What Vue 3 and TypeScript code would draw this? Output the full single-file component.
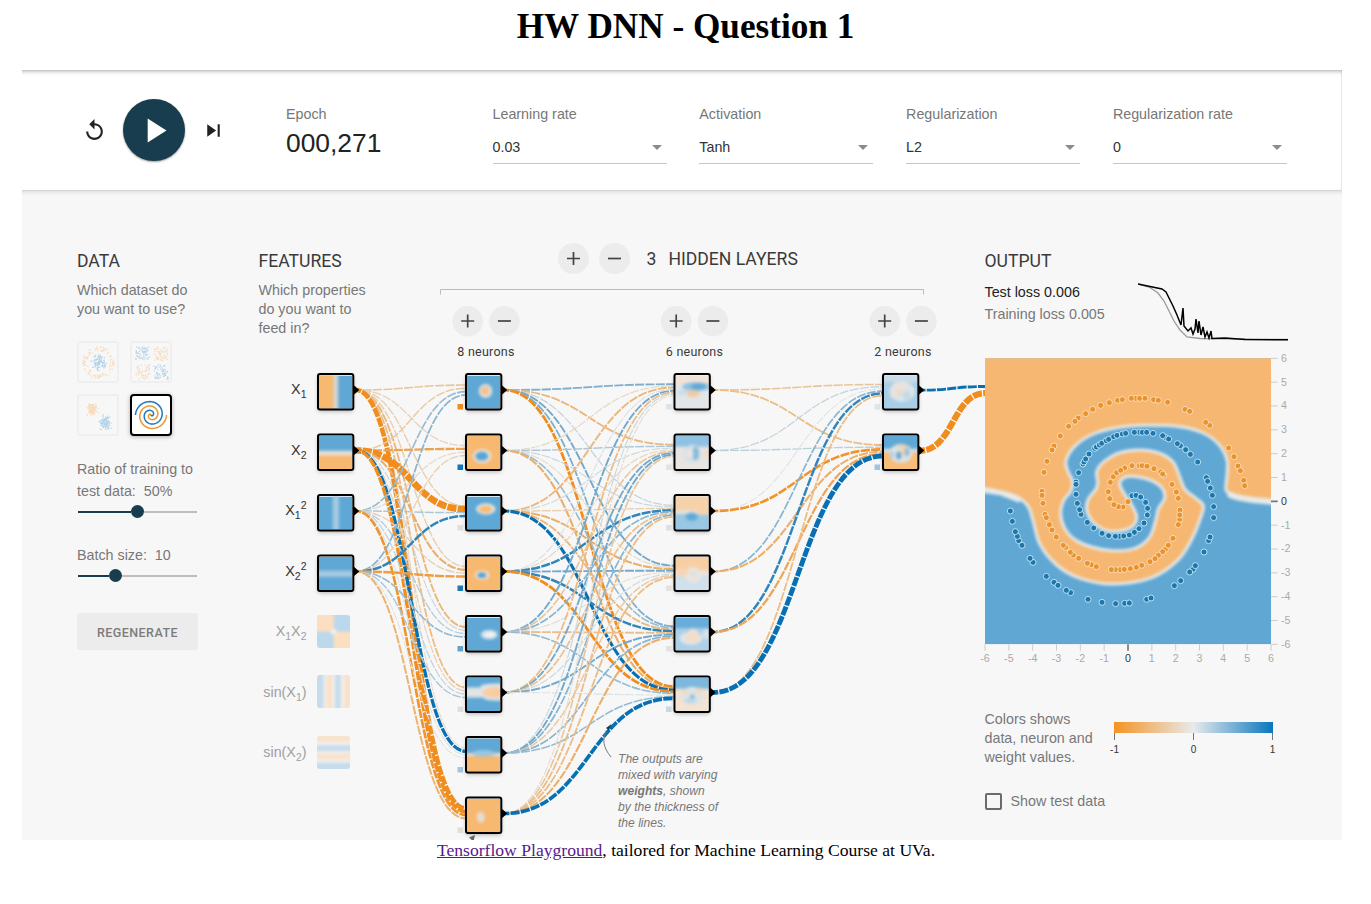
<script setup lang="ts">
type Point = [number, number]
interface Blob { x: number; y: number; rx: number; ry: number; c: string }
interface Band { x: number; y: number; w: number; h: number; c: string }
interface Node { x: number; y: number; base: string; bands: Band[]; blobs: Blob[]; bias?: string }

const ORANGE = '#f7b870'
const BLUE = '#5fa8d6'
const PALE = '#e8eaeb'

const e = (x: number, y: number, rx: number, ry: number, c: string): Blob => ({ x, y, rx, ry, c })
const b = (x: number, y: number, w: number, h: number, c: string): Band => ({ x, y, w, h, c })

const selects = [
  { label: 'Learning rate', value: '0.03' },
  { label: 'Activation', value: 'Tanh' },
  { label: 'Regularization', value: 'L2' },
  { label: 'Regularization rate', value: '0' },
]

/* ---------- network ---------- */
const rowY = (i: number) => 390 + i * 60.5

const features: Node[] = [
  { x: 317, y: 0, base: BLUE, bands: [b(-20, -20, 66, 140, ORANGE), b(43, -20, 14, 140, '#d6d6d2')], blobs: [] },
  { x: 317, y: 1, base: ORANGE, bands: [b(-20, -20, 140, 66, BLUE), b(-20, 44, 140, 14, '#e8dfd5')], blobs: [] },
  { x: 317, y: 2, base: BLUE, bands: [b(41, -20, 18, 140, '#a6cae2')], blobs: [] },
  { x: 317, y: 3, base: BLUE, bands: [b(-20, 41, 140, 18, '#a6cae2')], blobs: [] },
]
const idle = [
  { y: 615, base: '#bbd8ec', bands: [b(-20, -20, 70, 70, '#fbdfc0'), b(50, 50, 70, 70, '#fbdfc0')], blobs: [e(50, 50, 9, 9, '#f4efea')] },
  { y: 675, base: '#f2f1f0', bands: [b(-20, -20, 40, 140, '#c5dcec'), b(27, -20, 20, 140, '#f9e2cc'), b(54, -20, 17, 140, '#c5dcec'), b(80, -20, 40, 140, '#f9e2cc')], blobs: [] },
  { y: 736, base: '#f2f1f0', bands: [b(-20, -20, 140, 38, '#f9e2cc'), b(-20, 28, 140, 17, '#c5dcec'), b(-20, 52, 140, 19, '#f9e2cc'), b(-20, 80, 140, 40, '#c5dcec')], blobs: [] },
]
const layer1: Node[] = [
  { x: 465, y: 0, base: BLUE, bands: [], blobs: [e(55, 46, 20, 21, '#dfe3e4'), e(54, 45, 13, 13, '#f6c08a')], bias: '#f08c1f' },
  { x: 465, y: 1, base: ORANGE, bands: [], blobs: [e(45, 60, 28, 21, '#e8e2da'), e(44, 60, 19, 13, '#58a4d4')], bias: '#0f76b8' },
  { x: 465, y: 2, base: BLUE, bands: [], blobs: [e(56, 37, 29, 17, '#e3e6e6'), e(55, 38, 20, 11, '#f8bb78')], bias: '#e3ddd4' },
  { x: 465, y: 3, base: ORANGE, bands: [], blobs: [e(45, 54, 22, 14, '#efe2d3'), e(44, 54, 13, 8, '#4d9fd2')], bias: '#2077b4' },
  { x: 465, y: 4, base: BLUE, bands: [], blobs: [e(66, 51, 25, 14, '#d6e3ec'), e(68, 51, 15, 8, '#f2f1f0')], bias: '#64a4cc' },
  { x: 465, y: 5, base: BLUE, bands: [b(-20, 28, 140, 30, '#e2e4e5')], blobs: [e(90, 26, 50, 10, '#e2e4e5'), e(90, 60, 40, 8, '#dce3e6'), e(88, 43, 42, 16, '#f9cda0')], bias: '#e2dfd8' },
  { x: 465, y: 6, base: ORANGE, bands: [b(-20, -20, 140, 64, BLUE), b(-20, 44, 140, 8, '#dfe3e4')], blobs: [e(50, 44, 34, 10, '#9dc5df')], bias: '#a5c7dd' },
  { x: 465, y: 7, base: ORANGE, bands: [], blobs: [e(41, 54, 12, 17, '#e6dcd0')], bias: '#e5ddd1' },
]
const layer2: Node[] = [
  { x: 673.5, y: 0, base: '#e2e6e9', bands: [b(-20, -20, 140, 45, '#f1e3d8')], blobs: [e(62, 33, 42, 13, '#8dc0df'), e(68, 33, 22, 9, '#5fa8d6'), e(52, 54, 20, 10, '#f3c9a0'), e(20, 50, 14, 8, '#c9dbe6')], bias: '#dde3e7' },
  { x: 673.5, y: 1, base: '#e8e4e1', bands: [b(-20, -20, 140, 52, '#8fc2e2')], blobs: [e(50, 52, 26, 26, '#d3dfe6'), e(60, 52, 10, 20, '#88bbdb'), e(42, 52, 11, 12, '#ebe5e2'), e(94, 52, 9, 14, '#f2dcc6')], bias: '#e2e3e2' },
  { x: 673.5, y: 2, base: '#9ac7e4', bands: [b(-20, -20, 140, 64, '#f6d2ab'), b(-20, 42, 140, 10, '#e4e2dd')], blobs: [e(82, 42, 18, 14, '#f6d2ab'), e(48, 60, 18, 12, '#60a9d6')], bias: '#dbe2e7' },
  { x: 673.5, y: 3, base: '#d0e0ec', bands: [b(-20, -20, 140, 62, '#f7cfa3'), b(-20, 40, 140, 14, '#ece2da')], blobs: [e(52, 54, 24, 24, '#ebe3dd'), e(20, 46, 16, 14, '#f5d5b2'), e(53, 50, 9, 7, '#dae1e6')], bias: '#e4e3e1' },
  { x: 673.5, y: 4, base: '#acd0e7', bands: [b(-20, -20, 140, 52, '#68add9')], blobs: [e(46, 62, 34, 20, '#dfe4e6'), e(52, 50, 16, 18, '#eadfd5'), e(50, 62, 20, 14, '#f4ddc7'), e(92, 50, 12, 16, '#d5e2ea')], bias: '#e3e3e3' },
  { x: 673.5, y: 5, base: '#f2e3d3', bands: [b(-20, -20, 140, 52, '#7db7dc')], blobs: [e(50, 52, 34, 26, '#dde3e6'), e(30, 42, 9, 8, '#efdac4'), e(70, 38, 12, 8, '#efdac4'), e(50, 56, 7, 7, '#87b7d6'), e(44, 68, 18, 8, '#bdd6e5')], bias: '#c9d9e4' },
]
const layer3: Node[] = [
  { x: 882, y: 0, base: '#a9cfe7', bands: [b(-20, -20, 140, 40, '#c9dce8')], blobs: [e(54, 48, 38, 30, '#dce5ea'), e(48, 30, 24, 9, '#ece2d8'), e(46, 52, 8, 10, '#f1d9c0'), e(68, 60, 12, 14, '#c3d9e7'), e(28, 54, 8, 12, '#e6e2dd')], bias: '#dfe6eb' },
  { x: 882, y: 1, base: '#f7bd7b', bands: [b(-20, -20, 140, 60, BLUE), b(-20, 38, 140, 10, '#dbe0e2')], blobs: [e(50, 52, 34, 28, '#dde3e6'), e(58, 34, 20, 6, '#f3cfa8'), e(44, 58, 8, 12, '#6aa9d2'), e(68, 48, 8, 12, '#8fc0de'), e(56, 52, 6, 9, '#f4cfa6'), e(24, 56, 6, 12, '#b4d0e2')], bias: '#a3c4da' },
]
const nodes = [...features, ...layer1, ...layer2, ...layer3]

const w1 = [
  [-0.35, -0.2, -0.25, -0.25, -0.5, -0.45, -0.1, -1.9],
  [-0.3, -0.75, -3.1, -0.6, 0.12, -0.2, 1.25, -1.3],
  [0.35, -0.15, 0.25, -0.25, 0.2, 0.15, 0.04, -0.9],
  [0.4, -0.22, 0.8, -0.8, 0.35, 0.25, -0.05, -0.55],
]
const w2 = [
  [0.45, -0.5, 0.15, 0.5, 0.45, -1],
  [-0.15, 0.25, 0.12, -0.12, 0.35, -0.6],
  [-0.5, 0.1, -0.25, -0.6, -0.5, 1.15],
  [0.06, -0.15, 0.8, 0.5, 0.8, -1],
  [0.5, -0.35, 0.4, -0.1, -0.45, 0.35],
  [-0.45, 0.5, -0.4, 0.1, 0.5, 0.04],
  [0.12, 0.5, 0.4, -0.3, 0.4, 0.35],
  [-0.1, -0.35, -0.45, -0.45, -0.6, 1.45],
]
const w3 = [
  [-0.35, -0.45],
  [0.15, 0.18],
  [0.03, -0.9],
  [0.4, -0.6],
  [0.8, -0.7],
  [-0.45, 2.1],
]

function tint(w: number): string {
  const v = Math.min(1, Math.abs(w) * 1.02)
  const end = w < 0 ? [240, 141, 30] : [8, 112, 178]
  const mid = [228, 229, 228]
  return `rgb(${mid.map((m, i) => Math.round(m + (end[i] - m) * v)).join(',')})`
}
interface Link { d: string; color: string; width: number; offset: number }
function connect(weights: number[][], x1: number, x2: number): Link[] {
  const out: Link[] = []
  const n = weights.length
  weights.forEach((row, i) => row.forEach((w, j) => {
    const y1 = rowY(i)
    const y2 = rowY(j) + ((i - (n - 1) / 2) / n) * 13.2
    const mx = (x1 + x2) / 2
    out.push({ d: `M${x1},${y1}C${mx},${y1} ${mx},${y2} ${x2},${y2}`, color: tint(w), width: 1 + 1.85 * Math.abs(w), offset: 4 })
  }))
  return out
}
const links: Link[] = [
  ...connect(w1, 356, 466),
  ...connect(w2, 504, 674),
  ...connect(w3, 713, 883),
  { d: 'M920,390.2C953,390.2 953,386.5 985,386.5', color: tint(1), width: 2.9, offset: 4 },
  { d: 'M920,450.7C953,450.7 953,393.2 985,393.2', color: tint(-1), width: 6.2, offset: 4 },
]
const layers = [
  { x: 467.7, n: 8 },
  { x: 676.2, n: 6 },
  { x: 884.7, n: 2 },
]

/* ---------- datasets ---------- */
let seed = 11
const rand = () => {
  seed = (seed * 16807) % 2147483647
  return seed / 2147483647
}
const dots = (n: number, f: () => Point): Point[] => Array.from({ length: n }, f)
const ring = (r0: number, r1: number) => (): Point => {
  const r = r0 + rand() * (r1 - r0)
  const a = rand() * Math.PI * 2
  return [19 + r * Math.cos(a), 19 + r * Math.sin(a)]
}
const box = (x: number, y: number) => (): Point => [x + rand() * 14.5, y + rand() * 14.5]
const cloud = (x: number, y: number) => (): Point => [x + (rand() + rand() + rand() - 1.5) * 5, y + (rand() + rand() + rand() - 1.5) * 6]
const circleSet = { o: dots(110, ring(11.5, 16)), b: dots(110, ring(0, 8)) }
const xorSet = { o: [...dots(55, box(21, 3)), ...dots(55, box(3, 21))], b: [...dots(60, box(3, 3)), ...dots(60, box(21, 21))] }
const gaussSet = { o: dots(110, cloud(13, 13)), b: dots(110, cloud(26, 26)) }
const faded = [circleSet, xorSet, gaussSet]
const spiral = (delta: number): string =>
  Array.from({ length: 90 }, (_, i) => {
    const r = (i / 89) * 15.6
    const t = 1.75 * (i / 89) * 2 * Math.PI + delta
    return `${(19 + r * Math.sin(t)).toFixed(2)},${(19 + r * Math.cos(t)).toFixed(2)}`
  }).join(' ')

/* ---------- output map (three units per pixel) ---------- */
const orangePts: Point[] = [
  [222, 382], [231, 349], [252, 303], [246, 315], [271, 273], [296, 244], [325, 219], [315, 229], [347, 206], [368, 193], [392, 181], [418, 173],
  [443, 166], [457, 164], [497, 160], [484, 160], [509, 160], [525, 160], [551, 164], [565, 166], [593, 172], [645, 193], [659, 199], [719, 241], [707, 232],
  [776, 309], [792, 335], [804, 363], [811, 377], [821, 406], [824, 422], [474, 470], [459, 486], [445, 485], [432, 479], [419, 461], [415, 440],
  [421, 412], [430, 395], [440, 383], [464, 369], [452, 376], [486, 362], [508, 362], [516, 362], [531, 364], [552, 371], [572, 381], [582, 391], [578, 387],
  [606, 418], [619, 441], [625, 460], [630, 495], [629, 523], [629, 510], [625, 539], [609, 580], [586, 613], [595, 601], [578, 620], [565, 631], [555, 641],
  [540, 650], [515, 661], [499, 667], [481, 671], [450, 674], [463, 673], [436, 674], [424, 674], [364, 659], [379, 665], [352, 655], [326, 640], [310, 630],
  [301, 622], [287, 607], [280, 601], [259, 576], [246, 555], [238, 539], [225, 508], [229, 518], [219, 475], [216, 439], [216, 451],
]
const bluePts: Point[] = [
  [486, 452], [498, 451], [512, 456], [527, 472], [533, 490], [532, 510], [522, 534], [507, 551], [493, 562], [478, 570], [448, 574], [436, 574], [461, 573],
  [416, 572], [396, 565], [371, 549], [352, 532], [333, 508], [329, 494], [322, 475], [318, 448], [318, 411], [318, 418], [326, 383], [339, 357], [342, 351],
  [347, 342], [357, 327], [374, 310], [379, 306], [388, 300], [395, 295], [409, 287], [416, 283], [431, 275], [441, 271], [457, 267], [467, 265], [508, 262], [493, 262], [517, 262],
  [530, 262], [549, 265], [586, 277], [578, 272], [596, 282], [631, 302], [622, 296], [647, 314], [661, 328], [683, 351], [709, 398], [713, 409], [721, 429],
  [727, 451], [731, 485], [731, 518], [716, 587], [720, 576], [702, 621], [669, 673], [676, 662], [659, 681], [632, 707], [613, 722], [530, 763], [543, 759],
  [464, 775], [478, 774], [437, 776], [396, 772], [354, 763], [302, 743], [289, 736], [252, 712], [264, 721], [229, 694], [189, 652], [180, 640], [146, 587],
  [156, 601], [142, 574], [136, 560], [127, 529], [121, 498],
]
const boundary: Point[] = [
  [1000, 474], [902, 468], [830, 461], [788, 452], [768, 434], [771, 390], [771, 345], [748, 300], [700, 264], [630, 245], [530, 241], [440, 248],
  [370, 267], [315, 303], [288, 348], [295, 382], [308, 408], [302, 440], [281, 466], [272, 505], [283, 548], [312, 582], [365, 606], [430, 617],
  [495, 610], [538, 578], [556, 530], [565, 492], [584, 460], [577, 430], [545, 407], [500, 395], [464, 397], [449, 416], [462, 445], [484, 478], [500, 515],
  [486, 545], [440, 559], [400, 553], [368, 530], [350, 495], [355, 462], [378, 432], [383, 410], [380, 380], [402, 350], [450, 323], [510, 315],
  [570, 325], [610, 352], [630, 398], [645, 433], [678, 460], [700, 482], [693, 515], [664, 585], [622, 647], [545, 698], [430, 717],
  [330, 700], [260, 660], [210, 598], [190, 530], [174, 484], [140, 455], [90, 440], [45, 431], [-60, 420],
]
function smooth(p: Point[]): string {
  let d = `M${p[0][0]},${p[0][1]}`
  for (let i = 0; i < p.length - 1; i++) {
    const a = p[Math.max(0, i - 1)], s = p[i], t = p[i + 1], z = p[Math.min(p.length - 1, i + 2)]
    d += `C${s[0] + (t[0] - a[0]) / 6},${s[1] + (t[1] - a[1]) / 6} ${t[0] - (z[0] - s[0]) / 6},${t[1] - (z[1] - s[1]) / 6} ${t[0]},${t[1]}`
  }
  return d
}
const edge = smooth(boundary)
const region = `${edge}L-60,-60L1000,-60Z`
const ticks = Array.from({ length: 13 }, (_, i) => i - 6)
</script>

<template>
  <div class="page">
    <h1>HW DNN - Question 1</h1>

    <div class="frame">
      <header class="bar">
        <div class="controls">
          <svg class="reset" viewBox="0 0 24 24"><path d="M12 5V1L7 6l5 5V7c3.31 0 6 2.69 6 6s-2.69 6-6 6-6-2.69-6-6H4c0 4.42 3.58 8 8 8s8-3.58 8-8-3.58-8-8-8z" /></svg>
          <button class="play"><svg viewBox="0 0 24 24"><path d="M8 5v14l11-7z" /></svg></button>
          <svg class="step" viewBox="0 0 24 24"><path d="M6 18l8.5-6L6 6v12zM16 6v12h2V6h-2z" /></svg>
        </div>
        <div class="epoch">
          <span class="label">Epoch</span>
          <span class="count">000,271</span>
        </div>
        <div v-for="s in selects" :key="s.label" class="field">
          <span class="label">{{ s.label }}</span>
          <div class="select"><span>{{ s.value }}</span><i class="caret"></i></div>
        </div>
      </header>

      <main>
        <svg class="network" viewBox="22 191 1320 650">
          <defs>
            <filter id="soft" filterUnits="userSpaceOnUse" x="-20" y="-20" width="140" height="140" color-interpolation-filters="sRGB"><feGaussianBlur stdDeviation="4" /></filter>
            <filter id="drop" x="-30%" y="-30%" width="160%" height="170%"><feDropShadow dx="0" dy="2" stdDeviation="2" flood-color="#000" flood-opacity="0.3" /></filter>
          </defs>

          <path class="bracket" d="M440.500 294.500V289.500H923.500V294.500" />
          <g v-for="l in layers" :key="l.x">
            <g class="round"><circle :cx="l.x" cy="321.300" r="15.300" /><path :d="`M${l.x - 6.500} 321H${l.x + 6.500}M${l.x} 314.500V327.500`" /></g>
            <g class="round"><circle :cx="l.x + 36.700" cy="321.300" r="15.300" /><path :d="`M${l.x + 30.200} 321H${l.x + 43.200}`" /></g>
            <text class="neurons" :x="l.x + 18.300" y="356">{{ l.n }} neurons</text>
          </g>

          <g fill="none">
            <path v-for="(l, i) in links" :key="'u' + i" :d="l.d" stroke="#fff" stroke-opacity="0.8" :stroke-width="l.width" />
            <path v-for="(l, i) in links" :key="i" :d="l.d" :stroke="l.color" :stroke-width="l.width" stroke-dasharray="9.200 1.200" :stroke-dashoffset="l.offset" />
          </g>

          <g v-for="(n, i) in nodes" :key="'n' + i">
            <rect v-if="n.bias" :x="n.x - 7.500" :y="rowY(n.y) + 14" width="5.500" height="5.500" :fill="n.bias" />
            <path :d="`M${n.x + 36} ${rowY(n.y) - 5.500}l6.300 5.500l-6.300 5.500z`" />
            <rect :x="n.x + 1" :y="rowY(n.y) - 15.700" width="35" height="35" rx="2" fill="#fff" filter="url(#drop)" />
            <svg :x="n.x + 2" :y="rowY(n.y) - 14.500" width="33.300" height="33.300" viewBox="0 0 99 99">
              <rect width="99" height="99" :fill="n.base" />
              <g filter="url(#soft)">
                <rect v-for="(r, k) in n.bands" :key="'r' + k" :x="r.x" :y="r.y" :width="r.w" :height="r.h" :fill="r.c" />
                <ellipse v-for="(o, k) in n.blobs" :key="k" :cx="o.x" :cy="o.y" :rx="o.rx" :ry="o.ry" :fill="o.c" />
              </g>
            </svg>
            <rect :x="n.x + 1" :y="rowY(n.y) - 15.900" width="35.300" height="35.400" rx="2" fill="none" stroke="#000" stroke-width="2" />
          </g>

          <svg v-for="f in idle" :key="f.y" x="317" :y="f.y" width="33" height="33" viewBox="0 0 99 99">
            <clipPath :id="'tile' + f.y"><rect width="99" height="99" rx="9" /></clipPath>
            <g :clip-path="`url(#tile${f.y})`">
              <rect width="99" height="99" :fill="f.base" />
              <g filter="url(#soft)">
                <rect v-for="(r, k) in f.bands" :key="'r' + k" :x="r.x" :y="r.y" :width="r.w" :height="r.h" :fill="r.c" />
                <ellipse v-for="(o, k) in f.blobs" :key="k" :cx="o.x" :cy="o.y" :rx="o.rx" :ry="o.ry" :fill="o.c" />
              </g>
            </g>
          </svg>

          <g class="names">
            <text x="306.500" y="394">X<tspan class="sub" dy="4">1</tspan></text>
            <text x="306.500" y="454.500">X<tspan class="sub" dy="4">2</tspan></text>
            <text x="306.500" y="515">X<tspan class="sub" dy="4">1</tspan><tspan class="sub" dy="-10">2</tspan></text>
            <text x="306.500" y="575.500">X<tspan class="sub" dy="4">2</tspan><tspan class="sub" dy="-10">2</tspan></text>
            <g class="off">
              <text x="306.500" y="636">X<tspan class="sub" dy="4">1</tspan><tspan dy="-4">X</tspan><tspan class="sub" dy="4">2</tspan></text>
              <text x="306.500" y="696.500">sin(X<tspan class="sub" dy="4">1</tspan><tspan dy="-4">)</tspan></text>
              <text x="306.500" y="757">sin(X<tspan class="sub" dy="4">2</tspan><tspan dy="-4">)</tspan></text>
            </g>
          </g>

          <path d="M611 757C603 747 602 740 606.500 730" fill="none" stroke="#777" />
          <path d="M611.500 724l-5.500 4l3 2.500z" fill="#123f5c" />
          <path d="M475 835l-6 2.500l4.500 4z" fill="#666" />
          <text class="note">
            <tspan x="618" y="763">The outputs are</tspan>
            <tspan x="618" y="779">mixed with varying</tspan>
            <tspan x="618" y="795" class="strong">weights</tspan>, shown
            <tspan x="618" y="811">by the thickness of</tspan>
            <tspan x="618" y="827">the lines.</tspan>
          </text>
        </svg>

        <section class="data">
          <h3>DATA</h3>
          <p>Which dataset do<br />you want to use?</p>
          <div class="sets">
            <div v-for="(s, i) in faded" :key="i" class="set">
              <svg viewBox="0 0 38 38">
                <rect v-for="(p, k) in s.o" :key="'o' + k" :x="p[0]" :y="p[1]" width="1.200" height="1.200" fill="#f59322" />
                <rect v-for="(p, k) in s.b" :key="'b' + k" :x="p[0]" :y="p[1]" width="1.200" height="1.200" fill="#0877bd" />
              </svg>
            </div>
            <div class="set on">
              <svg viewBox="0 0 38 38" fill="none" stroke-width="1.500">
                <polyline :points="spiral(Math.PI)" stroke="#ef962f" />
                <polyline :points="spiral(0)" stroke="#1f7cbd" />
              </svg>
            </div>
          </div>
          <div class="ratio">Ratio of training to<br />test data:&nbsp; 50%</div>
          <div class="slider half"><i class="done"></i><i class="thumb"></i><i class="rest"></i></div>
          <div class="batch">Batch size:&nbsp; 10</div>
          <div class="slider third"><i class="done"></i><i class="thumb"></i><i class="rest"></i></div>
          <button class="regen">REGENERATE</button>
        </section>

        <section class="features">
          <h3>FEATURES</h3>
          <p>Which properties<br />do you want to<br />feed in?</p>
        </section>

        <section class="hidden">
          <svg class="btn round" viewBox="0 0 31 31"><circle cx="15.500" cy="15.500" r="15.500" /><path d="M9 15.500H22M15.500 9V22" /></svg>
          <svg class="btn round" viewBox="0 0 31 31"><circle cx="15.500" cy="15.500" r="15.500" /><path d="M9 15.500H22" /></svg>
          <span class="three">3</span>
          <span>HIDDEN LAYERS</span>
        </section>

        <section class="output">
          <h3>OUTPUT</h3>
          <div class="metrics">
            <div>
              <div class="test">Test loss 0.006</div>
              <div class="train">Training loss 0.005</div>
            </div>
            <svg class="loss" viewBox="1138 280 152 64" fill="none">
              <path stroke="#999" stroke-width="1.300" d="M1138 284L1150 287.500L1158 293L1164 301L1169 311L1174 321L1180 330L1187 337L1200 338.500L1288 339.500" />
              <path stroke="#000" stroke-width="1.500" d="M1138 284L1150 286.500L1162 289L1166 292L1169 298L1173 306L1177 315L1181 325L1183 308L1184 326L1188 331L1191 328L1193 334L1195 329L1196 319L1198 333L1199 321L1201 335L1203 327L1205 337L1207 332L1209 338L1211 331L1212 338.500L1225 338L1245 339.500L1288 339.800" />
            </svg>
          </div>
          <svg class="map" viewBox="0 0 990 960">
            <defs>
              <filter id="melt" filterUnits="userSpaceOnUse" x="-60" y="-60" width="1100" height="1100" color-interpolation-filters="sRGB"><feGaussianBlur stdDeviation="5.500" /></filter>
              <clipPath id="area"><rect x="45" y="40" width="858" height="858" /></clipPath>
            </defs>
            <g clip-path="url(#area)">
              <rect x="45" y="40" width="858" height="858" fill="#60a7d3" />
              <g filter="url(#melt)">
                <path :d="region" fill="#f5b771" />
                <path :d="edge" fill="none" :stroke="PALE" stroke-width="9" />
                <path d="M775 446C800 462 860 468 960 474" fill="none" :stroke="PALE" stroke-width="18" />
                <path d="M20 434L90 444L150 467" fill="none" :stroke="PALE" stroke-width="13" />
              </g>
            </g>
            <g class="pts">
              <circle v-for="(p, i) in orangePts" :key="'o' + i" :cx="p[0]" :cy="p[1]" r="9" fill="#ea922b" stroke="#fbe3c6" />
              <circle v-for="(p, i) in bluePts" :key="'b' + i" :cx="p[0]" :cy="p[1]" r="9" fill="#1f76ab" stroke="#c9ecfb" />
            </g>
            <g v-for="t in ticks" :key="t" class="axis" :class="{ zero: t === 0 }">
              <path :d="`M903 ${469 - t * 71.500}h20M${474 + t * 71.500} 898v19`" />
              <text x="933" :y="479 - t * 71.500">{{ t }}</text>
              <text class="mid" :x="474 + t * 71.500" y="950">{{ t }}</text>
            </g>
          </svg>
          <div class="legend">
            <span>Colors shows<br />data, neuron and<br />weight values.</span>
            <div class="scale">
              <div class="ramp"></div>
              <div class="marks"><span>-1</span><span>0</span><span>1</span></div>
            </div>
          </div>
          <label class="check"><i></i>Show test data</label>
        </section>
      </main>
    </div>

    <footer><a>Tensorflow Playground</a>, tailored for Machine Learning Course at UVa.</footer>
  </div>
</template>

<style>
body { margin: 0; background: #fff; }
</style>

<style scoped>
.page { width: 1371px; height: 904px; overflow: hidden; box-sizing: border-box; font-family: "Liberation Sans", Arial, sans-serif; color: #777; font-size: 14.3px; }
h1 { margin: 0; height: 70px; padding: 7px 0 0 0; box-sizing: border-box; text-align: center; font: bold 35.2px/40px "Liberation Serif", serif; color: #000; }
.frame { width: 1320px; height: 770px; margin-left: 22px; overflow: hidden; }
.bar { position: relative; display: flex; height: 120px; width: 1320px; background: #fff; box-shadow: inset 0 5px 4px -4px rgba(0, 0, 0, .35), inset -1px 0 1px rgba(0, 0, 0, .1); border-bottom: 1px solid #d6d6d6; z-index: 1; }
.controls { width: 264px; padding-left: 60px; box-sizing: border-box; display: flex; align-items: center; }
.reset, .step { width: 25px; height: 25px; fill: #222; flex: none; }
.play { width: 62px; height: 62px; margin: 0 16px; padding: 0; border: 0; border-radius: 50%; background: #183d4e; box-shadow: 0 1px 2px rgba(0, 0, 0, .4); display: flex; align-items: center; justify-content: center; }
.play svg { width: 41px; height: 41px; fill: #fff; margin-left: 0; }
.label { display: block; line-height: 20px; padding-top: 34px; }
.epoch { width: 206.500px; }
.count { display: block; font-size: 26.400px; line-height: 32px; margin-top: 3px; color: #222; }
.field { width: 206.800px; }
.select { width: 174px; height: 33px; margin-top: 7px; display: flex; align-items: center; justify-content: space-between; border-bottom: 1px solid #c6c6c6; box-sizing: border-box; color: #333; }
.caret { border: 5px solid transparent; border-top: 5px solid #8c8c8c; border-bottom: 0; margin-right: 5px; }

main { position: relative; height: 650px; background: #f7f7f7; box-shadow: inset 0 4px 4px -3px rgba(0, 0, 0, .12); display: grid; grid-template-columns: 181.500px 299px 427px 1fr; padding: 60px 0 0 55px; box-sizing: border-box; }
.network { position: absolute; left: 0; top: 0; width: 1320px; height: 650px; }
h3 { margin: 0; font: 400 17.600px/20px Roboto, sans-serif; color: #3a3a3a; }
p { margin: 10px 0 0; line-height: 19px; }
.bracket { fill: none; stroke: #bbb; }
.round circle { fill: #ececec; }
.round path { fill: none; stroke: #444; stroke-width: 1.700; }
.neurons { font: 12.500px Roboto, sans-serif; letter-spacing: .25px; fill: #3a3a3a; text-anchor: middle; }
.names { font-size: 14.300px; fill: #333; text-anchor: end; }
.names .sub { font-size: 10.500px; }
.names .off { fill: #a0a0a0; }
.note { font-size: 12.100px; font-style: italic; fill: #777; }
.note .strong { font-weight: bold; }

.sets { display: grid; grid-template-columns: 42px 42px; gap: 11px; margin-top: 22px; }
.set { height: 42px; box-sizing: border-box; border: 2px solid #efefef; border-radius: 3px; }
.set svg { display: block; width: 38px; height: 38px; opacity: .28; }
.set.on { border-color: #000; background: #fff; box-shadow: 0 1px 4px rgba(0, 0, 0, .3); border-radius: 4px; }
.set.on svg { opacity: 1; }
.ratio { margin-top: 22px; line-height: 22px; }
.slider { display: flex; align-items: center; height: 13px; width: 119px; margin: 3px 0 0 1px; }
.slider .done { height: 2px; background: #183d4e; }
.slider .rest { height: 2px; background: #bdbdbd; flex: 1; }
.slider .thumb { width: 13px; height: 13px; border-radius: 50%; background: #183d4e; }
.half .done { width: 53px; }
.third .done { width: 30.500px; }
.batch { margin-top: 26px; line-height: 22px; }
.regen { display: block; width: 121px; height: 37px; margin-top: 31px; padding: 2px 0 0; border: 0; border-radius: 3px; background: #ececec; color: #7c7c7c; font: 500 12.500px Roboto, sans-serif; letter-spacing: .45px; }

.hidden { display: flex; align-items: center; height: 31px; margin-top: -8px; font: 400 17.600px/20px Roboto, sans-serif; color: #3a3a3a; }
.btn { width: 31px; height: 31px; margin-right: 10px; }
.three { margin: 0 12px 0 7px; }

.metrics { display: flex; height: 87px; }
.metrics > div { width: 153px; padding-top: 10px; line-height: 22px; }
.test { color: #222; white-space: nowrap; }
.train { white-space: nowrap; }
.loss { width: 152px; height: 64px; margin-top: 9px; }
.map { display: block; width: 330px; height: 320px; margin: -13px 0 0 -15px; }
.pts circle { stroke-width: 2.600; }
.axis path { stroke: #ccc; stroke-width: 3; }
.axis text { font-size: 32px; fill: #aaa; }
.axis .mid { text-anchor: middle; }
.axis.zero path { stroke: #777; stroke-width: 5; }
.axis.zero text { fill: #333; }
.legend { display: flex; margin-top: 45px; line-height: 19px; height: 57px; white-space: nowrap; }
.legend > span { width: 129.500px; }
.scale { width: 159px; padding-top: 12px; }
.ramp { height: 11px; background: linear-gradient(90deg, #f59322, #e8eaeb 50%, #0877bd); }
.marks { display: flex; justify-content: space-between; margin: 0 -9.500px; font-size: 10px; line-height: 12px; color: #333; }
.marks span { width: 20px; text-align: center; padding-top: 11px; background: linear-gradient(#777, #777) 50% 0 / 1px 7px no-repeat; }
.check { display: flex; align-items: center; margin-top: 24px; height: 20px; }
.check i { width: 13px; height: 13px; border: 2px solid #6b6b6b; border-radius: 2px; margin: 0 9px 0 0; }
footer { padding-left: 1px; text-align: center; font: 17.600px/21px "Liberation Serif", serif; color: #000; }
footer a { color: #551a8b; text-decoration: underline; }
</style>
